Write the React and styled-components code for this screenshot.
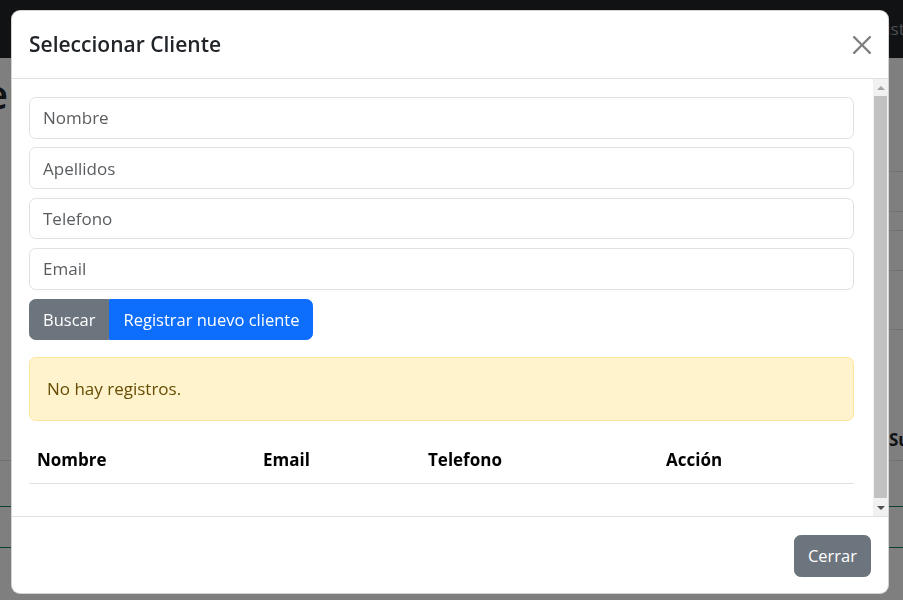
import styled, { createGlobalStyle } from 'styled-components';

const GlobalStyle = createGlobalStyle`
  * {
    box-sizing: border-box;
  }

  html, body {
    margin: 0;
    height: 100%;
    overflow: hidden;
  }

  body {
    font-family: "Open Sans", "Liberation Sans", sans-serif;
    font-size: 17px;
    line-height: 1.55;
    color: #212529;
    background: #fff;
  }
`;

/* page behind the modal */

const Page = styled.div`
  height: 600px;
  display: flex;
  flex-direction: column;
`;

const Navbar = styled.nav`
  height: 58px;
  flex: none;
  display: flex;
  align-items: center;
  background: #212529;
  overflow: hidden;
  white-space: nowrap;
`;

const NavLink = styled.span`
  margin-left: 857px;
  font-size: 17px;
  color: rgba(255, 255, 255, .55);
`;

const TopSection = styled.div`
  height: 272px;
  display: grid;
  grid-template-columns: 1fr 1fr;
`;

const PageTitle = styled.h1`
  margin: 12px 0 0 -15px;
  font-size: 40px;
  font-weight: 600;
  line-height: 1.2;
`;

const SideTable = styled.div`
  display: flex;
  flex-direction: column;
`;

const SideRow = styled.div`
  height: ${(p) => p.$h}px;
  border-bottom: 1px solid #dee2e6;
`;

const LowerTable = styled.div`
  display: flex;
  flex-direction: column;
  padding-top: 90px;
`;

const HeadRow = styled.div`
  display: grid;
  grid-template-columns: 889px auto;
  height: 41px;
  align-items: center;
  border-bottom: 1px solid #dee2e6;
  font-weight: 700;
  font-size: 17px;
  white-space: nowrap;
  overflow: hidden;
`;

const GreenRow = styled.div`
  height: ${(p) => p.$h}px;
  border-bottom: 1px solid #198754;
`;

/* modal */

const Backdrop = styled.div`
  position: fixed;
  inset: 0;
  background: rgba(0, 0, 0, .5);
`;

const ModalLayer = styled.div`
  position: fixed;
  inset: 0;
  display: flex;
  padding: 10px 14px 6px 11px;
`;

const Dialog = styled.div`
  flex: 1;
  display: flex;
  flex-direction: column;
  min-height: 0;
  background: #fff;
  border: 1px solid rgba(0, 0, 0, .175);
  border-radius: 9px;
  overflow: hidden;
`;

const Header = styled.div`
  height: 68px;
  flex: none;
  display: flex;
  align-items: center;
  justify-content: space-between;
  padding: 0 17px;
  border-bottom: 1px solid #dee2e6;
`;

const Title = styled.h5`
  margin: 0;
  font-size: 21px;
  font-weight: 600;
  line-height: 1.5;
`;

const CloseButton = styled.button`
  width: 18px;
  height: 18px;
  padding: 0;
  border: 0;
  background: transparent;
  opacity: .5;
  display: flex;
  cursor: pointer;
`;

const BodyRow = styled.div`
  flex: 1;
  min-height: 0;
  display: flex;
`;

const Body = styled.div`
  flex: 1;
  min-width: 0;
  overflow: hidden;
  padding: 18px 19px 18px 17px;
`;

const ScrollTrack = styled.div`
  width: 15px;
  flex: none;
  display: flex;
  flex-direction: column;
  background: #f1f1f1;
`;

const ScrollArrow = styled.div`
  height: 17px;
  flex: none;
  display: flex;
  align-items: center;
  justify-content: center;
`;

const ScrollThumb = styled.div`
  flex: 1;
  margin: 0 1px 1px;
  background: #c1c1c1;
`;

const Input = styled.input`
  display: block;
  width: 100%;
  height: 41.6px;
  margin-bottom: 8.8px;
  padding: 0 13px;
  border: 1px solid #dee2e6;
  border-radius: 6.6px;
  font: inherit;
  color: #212529;

  &::placeholder {
    color: rgba(33, 37, 41, .75);
  }
`;

const ButtonGroup = styled.div`
  display: flex;
  margin-bottom: 17px;
`;

const Button = styled.button`
  height: 41.8px;
  padding: 0 13px;
  border: 1px solid ${(p) => p.$bg};
  background: ${(p) => p.$bg};
  color: #fff;
  font: inherit;
  font-size: 16.5px;
  border-radius: 6.6px;
  cursor: pointer;
`;

const GroupButton = styled(Button)`
  &:first-child {
    border-top-right-radius: 0;
    border-bottom-right-radius: 0;
  }

  &:last-child {
    border-top-left-radius: 0;
    border-bottom-left-radius: 0;
  }
`;

const Alert = styled.div`
  padding: 17.6px 17px;
  margin-bottom: 17.6px;
  border: 1px solid #ffe69c;
  border-radius: 6.6px;
  background: #fff3cd;
  color: #664d03;
  line-height: 26.4px;
`;

const Table = styled.table`
  width: 100%;
  border-collapse: collapse;
  margin-bottom: 17.6px;
`;

const Th = styled.th`
  width: ${(p) => p.$w};
  padding: 8.8px 8px;
  text-align: left;
  font-weight: 700;
  line-height: 26.4px;
  color: #000;
  border-bottom: 1px solid #dee2e6;
`;

const Footer = styled.div`
  flex: none;
  display: flex;
  justify-content: flex-end;
  padding: 18px 17px 16px;
  border-top: 1px solid #dee2e6;
`;

function CloseIcon() {
  return (
    <svg width="18" height="18" viewBox="0 0 16 16" fill="#000">
      <path d="M.293.293a1 1 0 0 1 1.414 0L8 6.586 14.293.293a1 1 0 1 1 1.414 1.414L9.414 8l6.293 6.293a1 1 0 0 1-1.414 1.414L8 9.414l-6.293 6.293a1 1 0 0 1-1.414-1.414L6.586 8 .293 1.707a1 1 0 0 1 0-1.414" />
    </svg>
  );
}

function Arrow({ down }) {
  return (
    <svg width="8" height="4" viewBox="0 0 8 4">
      <path d={down ? 'M0 0L4 4L8 0z' : 'M0 4L4 0L8 4z'} fill={down ? '#505050' : '#a3a3a3'} />
    </svg>
  );
}

export default function App() {
  return (
    <>
      <GlobalStyle />
      <Page>
        <Navbar>
          <NavLink>Registro</NavLink>
        </Navbar>
        <TopSection>
          <PageTitle>ente</PageTitle>
          <SideTable>
            <SideRow $h={114} />
            <SideRow $h={40} />
            <SideRow $h={19} />
            <SideRow $h={40} />
            <SideRow $h={59} />
          </SideTable>
        </TopSection>
        <LowerTable>
          <HeadRow>
            <span />
            <span>Subtotal</span>
          </HeadRow>
          <GreenRow $h={46} />
          <GreenRow $h={41} />
        </LowerTable>
      </Page>

      <Backdrop />
      <ModalLayer>
        <Dialog>
          <Header>
            <Title>Seleccionar Cliente</Title>
            <CloseButton aria-label="Cerrar">
              <CloseIcon />
            </CloseButton>
          </Header>
          <BodyRow>
            <Body>
              <Input placeholder="Nombre" />
              <Input placeholder="Apellidos" />
              <Input placeholder="Telefono" />
              <Input placeholder="Email" />
              <ButtonGroup>
                <GroupButton $bg="#6c757d">Buscar</GroupButton>
                <GroupButton $bg="#0d6efd">Registrar nuevo cliente</GroupButton>
              </ButtonGroup>
              <Alert>No hay registros.</Alert>
              <Table>
                <thead>
                  <tr>
                    <Th $w="226px">Nombre</Th>
                    <Th $w="165px">Email</Th>
                    <Th $w="238px">Telefono</Th>
                    <Th>Acción</Th>
                  </tr>
                </thead>
                <tbody />
              </Table>
            </Body>
            <ScrollTrack>
              <ScrollArrow>
                <Arrow />
              </ScrollArrow>
              <ScrollThumb />
              <ScrollArrow>
                <Arrow down />
              </ScrollArrow>
            </ScrollTrack>
          </BodyRow>
          <Footer>
            <Button $bg="#6c757d">Cerrar</Button>
          </Footer>
        </Dialog>
      </ModalLayer>
    </>
  );
}
